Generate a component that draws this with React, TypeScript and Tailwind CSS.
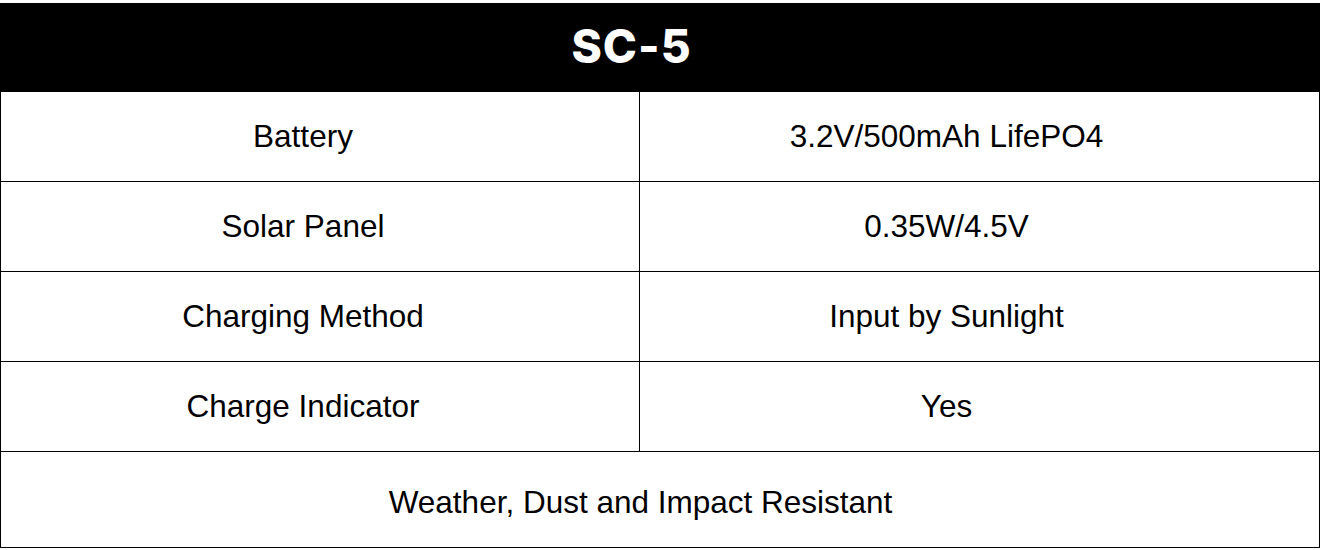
const rows = [
  ["Battery", "3.2V/500mAh LifePO4"],
  ["Solar Panel", "0.35W/4.5V"],
  ["Charging Method", "Input by Sunlight"],
  ["Charge Indicator", "Yes"],
];

export default function App() {
  return (
    <div className="w-[1320px] h-[550px] bg-white pt-[3px] font-['Liberation_Sans',Arial,sans-serif] text-black">
      <div className="border-x border-b border-black">
        <div className="h-[88px] bg-black flex items-center justify-center pr-[57px] pb-[3px]">
          <h1 className="font-['Inter',sans-serif] font-extrabold text-[46px] tracking-[1px] text-white leading-none">
            SC-5
          </h1>
        </div>
        {rows.map(([label, value]) => (
          <div
            key={label}
            className="grid grid-cols-[639px_1fr] h-[90px] border-t border-black text-[31.5px]"
          >
            <div className="flex items-center justify-center border-r border-black pr-[34px] pt-[1px]">
              {label}
            </div>
            <div className="flex items-center justify-center pr-[66px] pt-[1px]">{value}</div>
          </div>
        ))}
        <div className="h-[96px] border-t border-black flex items-center justify-center text-[31.5px] pt-[6px] pr-[39px]">
          Weather, Dust and Impact Resistant
        </div>
      </div>
    </div>
  );
}
